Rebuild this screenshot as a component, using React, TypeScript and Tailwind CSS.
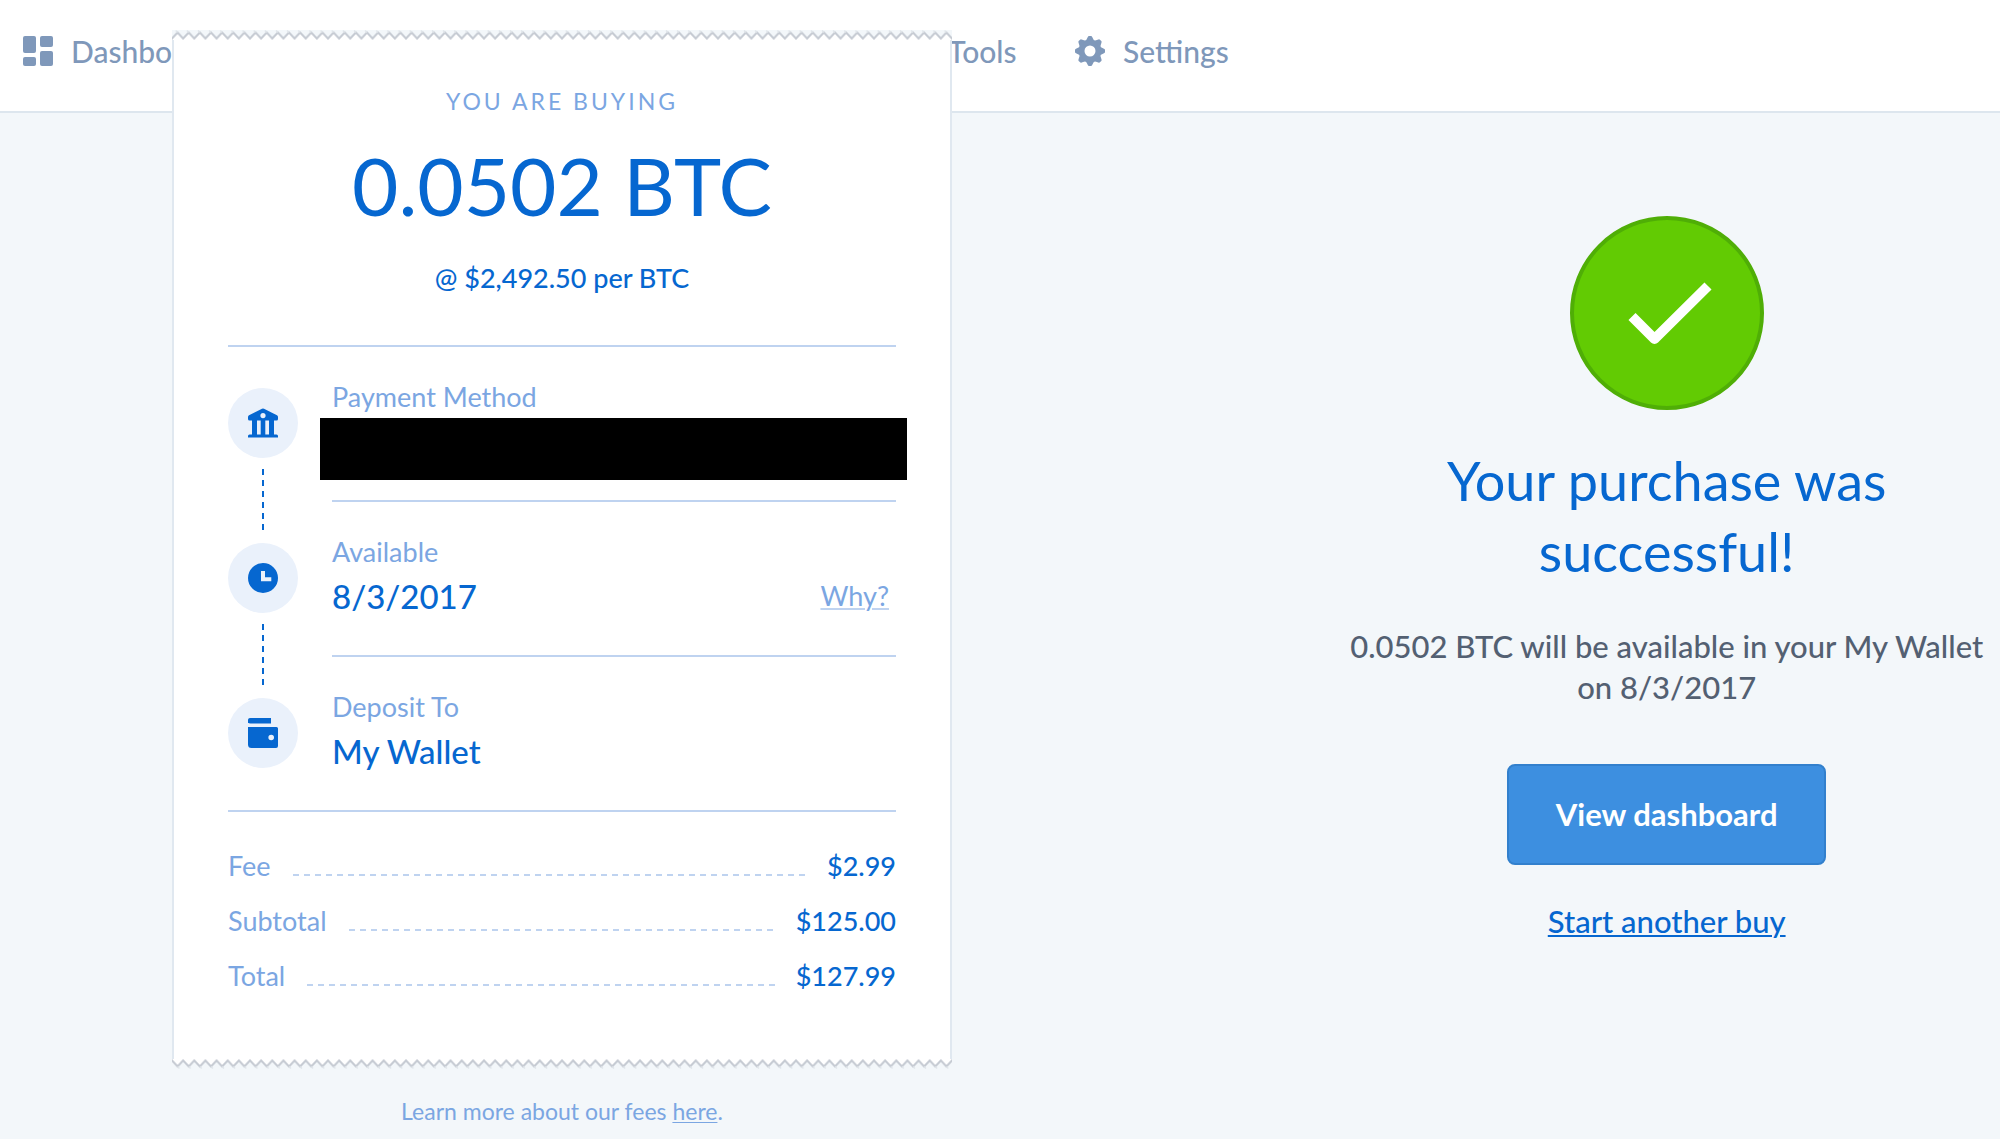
import type { ReactNode } from "react";

const fees = [
    { label: "Fee", amount: "$2.99" },
    { label: "Subtotal", amount: "$125.00" },
    { label: "Total", amount: "$127.99" },
];

function DashboardIcon() {
    return (
        <svg viewBox="0 0 30 30" className="size-[30px]" fill="currentColor" aria-hidden="true">
            <rect x="0" y="0" width="13" height="17" rx="2" />
            <rect x="0" y="21" width="13" height="9" rx="2" />
            <rect x="17" y="0" width="13" height="11" rx="2" />
            <rect x="17" y="15" width="13" height="15" rx="2" />
        </svg>
    );
}

function GearIcon() {
    return (
        <svg viewBox="-15 -15 30 30" className="size-[30px]" fill="currentColor" aria-hidden="true">
            <circle r="8.5" fill="none" stroke="currentColor" strokeWidth="6" />
            {[0, 45, 90, 135, 180, 225, 270, 315].map((angle) => (
                <path
                    key={angle}
                    d="M-4 -10.5 L-2.2 -14 Q-1.8 -15 -1 -15 H1 Q1.8 -15 2.2 -14 L4 -10.5 Z"
                    transform={`rotate(${angle})`}
                />
            ))}
        </svg>
    );
}

function BankIcon() {
    return (
        <svg viewBox="0 0 30 30" className="size-[30px]" fill="currentColor" aria-hidden="true">
            <path
                fillRule="evenodd"
                d="M14 .8 Q15 .3 16 .8 L29 7.2 Q30 7.8 30 9 V11 Q30 12.5 28.5 12.5 H26 V26.5 H28.5 Q30 26.5 30 28 V29.5 H0 V28 Q0 26.5 1.5 26.5 H4 V12.5 H1.5 Q0 12.5 0 11 V9 Q0 7.8 1 7.2 Z M15 5 A2.6 2.6 0 1 0 15 10.2 A2.6 2.6 0 1 0 15 5 Z M9 12.5 V26.5 H12.7 V12.5 Z M17.3 12.5 V26.5 H21 V12.5 Z"
            />
        </svg>
    );
}

function ClockIcon() {
    return (
        <svg viewBox="0 0 30 30" className="size-[30px]" fill="currentColor" aria-hidden="true">
            <path
                fillRule="evenodd"
                d="M15 0 A15 15 0 1 0 15 30 A15 15 0 1 0 15 0 Z M13 8 H17 V14.3 H23.3 V18.3 H13 Z"
            />
        </svg>
    );
}

function WalletIcon() {
    return (
        <svg viewBox="0 0 30 30" className="size-[30px]" fill="currentColor" aria-hidden="true">
            <path d="M2.5 0 H23 V5.5 H2.5 A2.75 2.75 0 0 1 2.5 0 Z" />
            <path
                fillRule="evenodd"
                d="M0 9 H28.5 Q30 9 30 10.5 V28 Q30 30 28 30 H3.5 Q0 30 0 26.5 Z M23.2 16.7 A2.8 2.8 0 1 0 23.2 22.3 A2.8 2.8 0 1 0 23.2 16.7 Z"
            />
        </svg>
    );
}

// Torn paper edge, flipped over for the bottom of the receipt
function TornEdge({ id, flip = false }: { id: string; flip?: boolean }) {
    return (
        <svg className={flip ? "block h-[10px] w-full rotate-180" : "block h-[10px] w-full"} aria-hidden="true">
            <defs>
                <pattern id={id} width="11.143" height="10" patternUnits="userSpaceOnUse">
                    <rect width="12" height="10" fill="#f3f7fa" />
                    <path d="M-1 9.5 L0 8.5 L5.57 2.5 L11.143 8.5 L12 9.5 V10 H-1 Z" fill="#fff" />
                    <path
                        d="M-1 7.5 L0 8.5 L5.57 2.5 L11.143 8.5 L12.2 7.5"
                        fill="none"
                        stroke="#c6cbd3"
                        strokeWidth="2"
                    />
                    <path d="M3.8 .6 L5.57 2.5" stroke="#dfe4e9" strokeWidth="1.4" />
                </pattern>
            </defs>
            <rect width="100%" height="10" fill={`url(#${id})`} />
        </svg>
    );
}

function NavLink({ icon, label, className = "" }: { icon?: ReactNode; label: string; className?: string }) {
    return (
        <a href="#" className={`flex items-center gap-[18px] text-[30px] leading-[34px] ${className}`}>
            {icon}
            {label}
        </a>
    );
}

function Step({ icon, label, last = false, children }: { icon: ReactNode; label: string; last?: boolean; children: ReactNode }) {
    return (
        <li className={last ? "flex h-[153px] gap-[34px]" : "flex h-[155px] gap-[34px]"}>
            <div className="flex w-[70px] shrink-0 flex-col items-center pt-[41px]">
                <div className="flex size-[70px] shrink-0 items-center justify-center rounded-full bg-[#eaf1fb]">{icon}</div>
                {!last && (
                    <div className="mt-[11px] h-[63px] w-[2px] shrink-0 bg-[repeating-linear-gradient(to_bottom,#0667d0_0_6px,transparent_6px_11px)]" />
                )}
            </div>
            <div className={last ? "relative flex-1 pt-[34px]" : "relative flex-1 border-b-2 border-[#bfd3f0] pt-[34px]"}>
                <p className="text-[27px] leading-8 text-[#7ba6e2]">{label}</p>
                {children}
            </div>
        </li>
    );
}

function Receipt() {
    return (
        <article className="w-[780px]">
            <TornEdge id="torn-top" />
            <div className="border-x-2 border-[#e0e8f0] bg-white px-[54px] pb-[67px] text-[#0667d0]">
                <header className="border-b-2 border-[#bfd3f0] pb-[51px] text-center">
                    <p className="pt-[45px] text-[23px] leading-8 tracking-[3px] text-[#7ba6e2]">YOU ARE BUYING</p>
                    <p className="mt-[18px] text-[80px] leading-[100px]">0.0502 BTC</p>
                    <p className="mt-[27px] text-[27px] leading-8 font-medium">@ $2,492.50 per BTC</p>
                </header>

                <ul className="border-b-2 border-[#bfd3f0]">
                    <Step icon={<BankIcon />} label="Payment Method">
                        <div className="absolute top-[71px] -right-[11px] -left-3 h-[62px] bg-black" />
                    </Step>
                    <Step icon={<ClockIcon />} label="Available">
                        <div className="mt-2 flex items-center justify-between pr-[7px]">
                            <span className="text-[33px] leading-10 font-medium">8/3/2017</span>
                            <a
                                href="#"
                                className="text-[27px] leading-10 text-[#7ba6e2] underline decoration-[#bfd3f0] decoration-2 underline-offset-2"
                            >
                                Why?
                            </a>
                        </div>
                    </Step>
                    <Step icon={<WalletIcon />} label="Deposit To" last>
                        <p className="mt-2 text-[33px] leading-10 font-medium">My Wallet</p>
                    </Step>
                </ul>

                <dl className="flex flex-col gap-[23px] pt-[38px] text-[27px] leading-8">
                    {fees.map((fee) => (
                        <div key={fee.label} className="flex items-end">
                            <dt className="text-[#7ba6e2]">{fee.label}</dt>
                            <dd className="flex flex-1 items-end font-medium">
                                <span className="mr-[18px] mb-[6px] ml-[22px] h-[2px] flex-1 bg-[repeating-linear-gradient(to_right,#bfd3f0_0_6px,transparent_6px_11px)]" />
                                {fee.amount}
                            </dd>
                        </div>
                    ))}
                </dl>
            </div>
            <TornEdge id="torn-bottom" flip />
        </article>
    );
}

export default function App() {
    return (
        <div className="min-h-screen overflow-x-hidden bg-[#f3f7fa] font-['Lato','Open_Sans',sans-serif]">
            <header className="h-[113px] border-b-2 border-[#dde6ee] bg-white">
                <nav className="flex pt-[34px] pl-[23px] font-medium text-[#7f98ba]">
                    <NavLink icon={<DashboardIcon />} label="Dashboard" className="w-[925px]" />
                    <NavLink label="Tools" className="w-[127px]" />
                    <NavLink icon={<GearIcon />} label="Settings" />
                </nav>
            </header>

            <main className="flex justify-between">
                <section className="relative -mt-[83px] flex w-[56.2%] flex-col items-center">
                    <Receipt />
                    <p className="mt-[26px] text-[23px] leading-8 text-[#7ba6e2]">
                        Learn more about our fees{" "}
                        <a href="#" className="underline decoration-1 underline-offset-2">
                            here
                        </a>
                        .
                    </p>
                </section>

                <section className="flex w-1/3 flex-col items-center pt-[103px] text-center">
                    <div className="flex size-[194px] items-center justify-center rounded-full border-4 border-[#4fae06] bg-[#62cb03]">
                        <svg viewBox="0 0 90 64" className="h-16 w-[90px]" aria-hidden="true">
                            <path d="M10 35.5 L32.5 58 L86 5" fill="none" stroke="#fff" strokeWidth="10" strokeLinejoin="round" />
                        </svg>
                    </div>
                    <h1 className="mt-[35px] w-[520px] text-[54px] leading-[71px] text-[#0667d0]">Your purchase was successful!</h1>
                    <p className="mt-[39px] w-[644px] text-[31px] leading-[41px] font-medium text-[#536072]">
                        0.0502 BTC will be available in your My Wallet on 8/3/2017
                    </p>
                    <button
                        type="button"
                        className="mt-14 h-[101px] w-[319px] rounded-lg border-2 border-[#3280cd] bg-[#3d8fe0] text-[31px] font-bold text-white"
                    >
                        View dashboard
                    </button>
                    <a href="#" className="mt-9 text-[31px] leading-10 font-medium text-[#0667d0] underline decoration-2 underline-offset-2">
                        Start another buy
                    </a>
                </section>
            </main>
        </div>
    );
}
